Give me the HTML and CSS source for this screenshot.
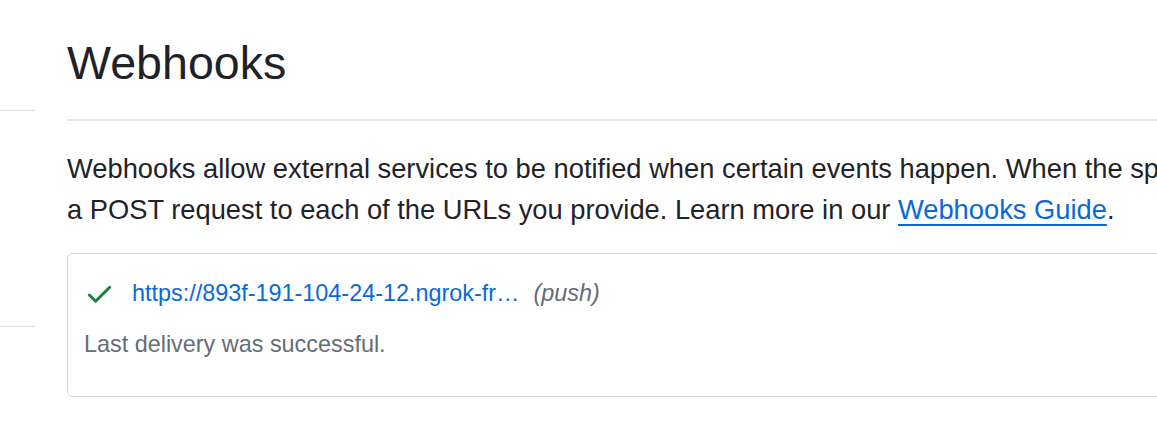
FILE: index.html
```html
<!DOCTYPE html>
<html lang="en">
<head>
<meta charset="utf-8">
<title>Webhooks</title>
<link rel="stylesheet" href="styles.css">
</head>
<body>
<div class="layout">
  <nav class="sidebar">
    <div class="nav-group nav-group-top"></div>
    <div class="nav-group nav-group-mid"></div>
    <div class="nav-group"></div>
  </nav>
  <main class="content">
    <div class="subhead">
      <h2 class="subhead-title">Webhooks</h2>
    </div>
    <p class="intro">Webhooks allow external services to be notified when certain events happen. When the specified events happen, we’ll send a POST request to each of the URLs you provide. Learn more in our <a class="guide-link" href="#">Webhooks Guide</a>.</p>
    <div class="hook-box">
      <div class="hook-row">
        <svg class="check-icon" viewBox="0 0 16 16" width="31" height="31" aria-hidden="true"><path d="M13.78 4.22a.75.75 0 0 1 0 1.06l-7.25 7.25a.75.75 0 0 1-1.06 0L2.22 9.28a.751.751 0 0 1 .018-1.042.751.751 0 0 1 1.042-.018L6 10.94l6.72-6.72a.75.75 0 0 1 1.06 0Z"/></svg>
        <a class="hook-url" href="#">https://893f-191-104-24-12.ngrok-fr…</a>
        <em class="hook-events">(push)</em>
      </div>
      <div class="hook-status">Last delivery was successful.</div>
    </div>
  </main>
</div>
</body>
</html>
```

FILE: styles.css
```css
html, body {
  margin: 0;
  padding: 0;
  background: #ffffff;
  overflow: hidden;
}

body {
  font-family: "Liberation Sans", Arial, sans-serif;
  color: #1f2328;
  width: 1157px;
  height: 430px;
}

.layout {
  display: flex;
  width: 1567px;
}

.sidebar {
  width: 35px;
  flex: none;
  display: flex;
  flex-direction: column;
}

.nav-group-top {
  height: 110px;
  border-bottom: 1px solid #d8dee4;
}

.nav-group-mid {
  height: 215px;
  border-bottom: 1px solid #d8dee4;
}

.content {
  flex: 1;
  margin-left: 32px;
  padding-top: 29px;
}

.subhead {
  border-bottom: 2px solid #e3e7eb;
  padding-bottom: 20px;
}

.subhead-title {
  margin: 0;
  font-size: 46.6px;
  line-height: 1.5;
  font-weight: 400;
  color: #1f2328;
}

.intro {
  margin: 27px 0 0;
  font-size: 27.3px;
  line-height: 41px;
  color: #1f2328;
}

.guide-link {
  color: #0969da;
  text-decoration: underline;
  text-decoration-thickness: 2px;
  text-underline-offset: 5px;
}

.hook-box {
  margin-top: 23px;
  border: 1px solid #d0d7de;
  border-radius: 6px;
  padding: 22px 16px 34px;
}

.hook-row {
  display: flex;
  align-items: center;
  font-size: 23.4px;
  line-height: 35px;
}

.check-icon {
  fill: #1a7f37;
  margin-right: 17px;
  flex: none;
}

.hook-url {
  color: #0969da;
  text-decoration: none;
}

.hook-events {
  color: #656d76;
  margin-left: 14px;
}

.hook-status {
  margin-top: 16px;
  font-size: 23.4px;
  line-height: 35px;
  color: #656d76;
}
```
